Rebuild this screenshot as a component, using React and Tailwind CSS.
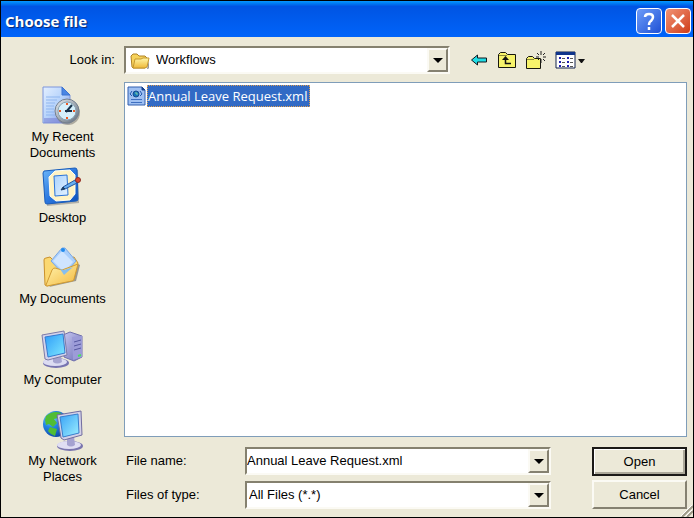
import { useState } from 'react'

function PlaceIcon({ children }) {
  return (
    <svg width="40" height="40" viewBox="1 0 40 40" className="shrink-0 overflow-visible" aria-hidden="true">
      {children}
    </svg>
  )
}

function RecentIcon() {
  return (
    <PlaceIcon>
      <defs>
        <linearGradient id="page" x1="0" y1="0" x2="1" y2="1">
          <stop offset="0" stopColor="#e3efff" />
          <stop offset="0.5" stopColor="#b5d2fb" />
          <stop offset="1" stopColor="#7f86d8" />
        </linearGradient>
        <linearGradient id="ring" x1="0" y1="0" x2="1" y2="1">
          <stop offset="0" stopColor="#e8edf2" />
          <stop offset="1" stopColor="#5f6a78" />
        </linearGradient>
      </defs>
      <path d="M1 2h19l8 8v28H1z" fill="url(#page)" stroke="#7d95dc" />
      <path d="M20 2v8h8z" fill="#4a86e4" stroke="#3d73d0" />
      <path d="M4 12h14M4 15h11M4 18h9M4 21h8M4 24h8M4 27h8M4 30h9" stroke="#8fb6ef" />
      <path d="M2 33h13l5 5H2z" fill="#7d87d6" opacity="0.6" />
      <circle cx="26" cy="28" r="12" fill="#6e6c66" opacity="0.5" />
      <circle cx="25" cy="26" r="12" fill="url(#ring)" stroke="#74808e" />
      <circle cx="25" cy="26" r="9" fill="#d6f0fb" stroke="#8aa5b5" />
      <path d="M25 18v2M25 32v2M17 26h2M31 26h2" stroke="#ed5b24" strokeWidth="2" />
      <path d="M23 26h7M24 27l6-7" stroke="#18324a" strokeWidth="2" />
    </PlaceIcon>
  )
}

function DesktopIcon() {
  return (
    <PlaceIcon>
      <defs>
        <linearGradient id="desk" x1="0" y1="0" x2="1" y2="1">
          <stop offset="0" stopColor="#6db8fa" />
          <stop offset="0.5" stopColor="#2c78df" />
          <stop offset="1" stopColor="#0c50ba" />
        </linearGradient>
        <linearGradient id="sheet" x1="0" y1="0" x2="1" y2="1">
          <stop offset="0" stopColor="#a9d2fd" />
          <stop offset="1" stopColor="#e4f2ff" />
        </linearGradient>
      </defs>
      <path d="M4 6l32-2 1 33-32 3z" fill="#777" opacity="0.5" />
      <path d="M2 5l31-3q2 0 2 2l1 29q0 2-2 2L5 38q-2 0-2-2L1 7z" fill="url(#desk)" stroke="#195dbb" />
      <path d="M13 5l15-1 5 5v19l-5 6-14 1-6-5-1-19z" fill="#fff3c4" stroke="#fffdf0" />
      <path d="M12 10l13-1 1 20-13 1z" fill="url(#sheet)" stroke="#2c75d8" />
      <path d="M21 21l12-7 2 3-12 6z" fill="#67aef0" stroke="#25559f" />
      <path d="M19 24l2-3 2 2z" fill="#173c67" stroke="#173c67" />
      <circle cx="36" cy="14" r="2.500" fill="#dd482b" stroke="#8e2d23" />
    </PlaceIcon>
  )
}

function DocumentsIcon() {
  return (
    <PlaceIcon>
      <defs>
        <linearGradient id="docFolder" x1="0" y1="0" x2="1" y2="1">
          <stop offset="0" stopColor="#fff3ae" />
          <stop offset="1" stopColor="#f3b93f" />
        </linearGradient>
      </defs>
      <path d="M7 40l27-6 4-16-4-2z" fill="#65635b" opacity="0.6" />
      <path d="M2 13q0-2 2-2l4-1 4 4 20-4 4 6-4 16-27 7-2-1z" fill="#fbd871" stroke="#ca912b" />
      <path d="M20 1h3l11 13-12 14L9 14z" fill="#a9cffc" stroke="#7aa7e4" />
      <path d="M20 4l11 11-9 10L11 14z" fill="#cfe5ff" />
      <circle cx="21" cy="3" r="2" fill="#218bed" />
      <path d="M10 23q1-2 3-2l7 2 16-6-4 15q0 2-2 2L5 39q-1 0-1-1z" fill="url(#docFolder)" stroke="#d09b34" />
      <path d="M18 22l4 1 9-3-9 8z" fill="#86beee" />
    </PlaceIcon>
  )
}

function ComputerIcon() {
  return (
    <PlaceIcon>
      <defs>
        <linearGradient id="screen" x1="0" y1="0" x2="1" y2="1">
          <stop offset="0" stopColor="#2f9df8" />
          <stop offset="1" stopColor="#7fe8ff" />
        </linearGradient>
        <linearGradient id="tower" x1="0" y1="0" x2="1" y2="1">
          <stop offset="0" stopColor="#c8c9f2" />
          <stop offset="1" stopColor="#6b6cb4" />
        </linearGradient>
      </defs>
      <path d="M21 7l7-3 12 4v21l-8 4-10-4z" fill="url(#tower)" stroke="#7070ad" />
      <path d="M30 9l10-1v21l-9 3z" fill="#9c9cd8" />
      <path d="M32 14l7-2M32 18l7-2M32 22l7-2" stroke="#5658a0" />
      <path d="M36 28l3-1" stroke="#46e25d" strokeWidth="2" />
      <ellipse cx="14" cy="35" rx="13" ry="5" fill="#7774b0" />
      <ellipse cx="13" cy="34" rx="12" ry="4" fill="#dcdcf2" />
      <path d="M11 28h8l1 6q-5 3-9 0z" fill="#a5a4d0" />
      <path d="M0 7l22-4 3 24-19 5-3-1z" fill="#d3d2ea" stroke="#7c7ba8" />
      <path d="M3 9l18-3 2 19-17 4z" fill="url(#screen)" stroke="#357acf" />
    </PlaceIcon>
  )
}

function NetworkIcon() {
  return (
    <PlaceIcon>
      <defs>
        <radialGradient id="globe" cx="0.3" cy="0.3" r="0.8">
          <stop offset="0" stopColor="#a3dbff" />
          <stop offset="0.4" stopColor="#2487e6" />
          <stop offset="1" stopColor="#0d3f9f" />
        </radialGradient>
        <linearGradient id="netScreen" x1="0" y1="0" x2="1" y2="1">
          <stop offset="0" stopColor="#39a2f6" />
          <stop offset="1" stopColor="#9df0ff" />
        </linearGradient>
      </defs>
      <circle cx="14" cy="15" r="13" fill="url(#globe)" />
      <path d="M4 7q7-6 15-3l-3 5-4 1 3 4-4 4-4-3-3 1-1-5zM8 18l7 2-2 7q-4-1-7-5z" fill="#51bd34" />
      <ellipse cx="28" cy="37" rx="13" ry="5" fill="#7a75ae" />
      <ellipse cx="27" cy="36" rx="12" ry="4" fill="#e0def3" />
      <path d="M25 27h7l1 9q-4 3-8 0z" fill="#a5a2d0" />
      <path d="M15 6l24-4 1 24-18 5-3-2z" fill="#d3d1e8" stroke="#716da0" />
      <path d="M18 8l18-3 1 19-16 4z" fill="url(#netScreen)" stroke="#397ecc" />
    </PlaceIcon>
  )
}

function FolderIcon() {
  return (
    <svg width="20" height="18" viewBox="0 0 20 18" aria-hidden="true">
      <defs>
        <linearGradient id="folder" x1="0" y1="0" x2="0" y2="1">
          <stop offset="0" stopColor="#fff6a7" />
          <stop offset="1" stopColor="#efb939" />
        </linearGradient>
      </defs>
      <path d="M4 17h13l2-9v8l-1 1z" fill="#555" opacity="0.6" />
      <path d="M2 15L1 4l2-2h4l2 2h6l2 2v8l-2 2H3z" fill="#f6d25b" stroke="#b08224" />
      <path d="M3 16l2-9h6l2-1h6l-2 9-2 1z" fill="url(#folder)" stroke="#c59830" />
    </svg>
  )
}

function XmlIcon() {
  return (
    <svg width="19" height="20" viewBox="0 0 19 20" aria-hidden="true">
      <path d="M1 1h14l3 3v15H1z" fill="#9fc0f2" stroke="#315fae" />
      <path d="M15 1v3h3z" fill="#16438d" stroke="#16438d" />
      <path d="M5 5L3 8l2 2M13 5l2 3-2 2" fill="none" stroke="#2358ab" />
      <circle cx="9" cy="8" r="3" fill="#1674b9" stroke="#174c8e" />
      <path d="M8 7h2v2" stroke="#7ed0a0" fill="none" />
      <path d="M4 13.500h11M4 16.500h11" stroke="#3f6fc0" />
    </svg>
  )
}

function BackIcon() {
  return (
    <svg width="18" height="14" viewBox="0 0 18 14" aria-hidden="true">
      <path d="M1.500 7l6-5v3h9v4h-9v3z" fill="#20dce4" stroke="#101820" />
    </svg>
  )
}

function UpIcon() {
  return (
    <svg width="20" height="18" viewBox="0 0 20 18" aria-hidden="true">
      <path d="M1.500 3.500l2-2h5l2 2h8v13h-17z" fill="#f7f36b" stroke="#17170f" />
      <path d="M2 4.500h8" stroke="#8c8938" />
      <path d="M14 12.500H8.500V8" fill="none" stroke="#111" strokeWidth="1.500" />
      <path d="M5 9h7L8.500 5z" fill="#111" />
    </svg>
  )
}

function NewFolderIcon() {
  return (
    <svg width="20" height="20" viewBox="0 0 20 20" aria-hidden="true">
      <path d="M.5 8.500l2-2h4l2 2h6v10H.5z" fill="#f7f36b" stroke="#17170f" />
      <path d="M1 9.500h7" stroke="#8c8938" />
      <path d="M15 1v4M15 9v4M10 7h3M17 7h3M11 3l2 2M17 9l2 2M19 3l-2 2M13 9l-1 1" stroke="#222" />
    </svg>
  )
}

function ViewIcon() {
  return (
    <svg width="30" height="18" viewBox="0 0 30 18" aria-hidden="true">
      <path d="M1 1h19v16H1z" fill="#fff" stroke="#12234c" />
      <path d="M1 1h19v3H1z" fill="#10358b" />
      <path d="M4 7h2M4 11h2M4 15h2M12 7h2M12 11h2M12 15h2" stroke="#2020b0" strokeWidth="2" />
      <path d="M7 7.500h3M7 11.500h3M7 15.500h3M15 7.500h3M15 11.500h3M15 15.500h3" stroke="#555" />
      <path d="M23 8h7l-3 4h-1z" fill="#111" />
    </svg>
  )
}

function Arrow() {
  return (
    <svg width="10" height="5" viewBox="0 0 10 5" aria-hidden="true">
      <path d="M0 0h10L5 5z" fill="#000" />
    </svg>
  )
}

const places = [
  { name: 'My Recent Documents', icon: RecentIcon },
  { name: 'Desktop', icon: DesktopIcon },
  { name: 'My Documents', icon: DocumentsIcon },
  { name: 'My Computer', icon: ComputerIcon },
  { name: 'My Network Places', icon: NetworkIcon },
]

const tools = [
  { name: 'Back', icon: BackIcon },
  { name: 'Up one level', icon: UpIcon },
  { name: 'Create new folder', icon: NewFolderIcon },
  { name: 'View menu', icon: ViewIcon },
]

const sunken =
  'flex h-7 items-stretch border-2 border-t-[#85816f] border-l-[#85816f] border-r-[#fbfaf4] border-b-[#fbfaf4] bg-white'
const raised =
  'border-2 border-t-[#fbfaf4] border-l-[#fbfaf4] border-r-[#858171] border-b-[#858171] bg-[#ece9d8]'

function SelectBox({ id, icon, children }) {
  return (
    <div className={`relative ${sunken}`}>
      {icon && <span className="pointer-events-none absolute top-1 left-1">{icon}</span>}
      <select
        id={id}
        className={`min-w-0 flex-1 appearance-none bg-white outline-none ${icon ? 'pl-[30px]' : 'pl-0.5'}`}
      >
        {children}
      </select>
      <span className={`pointer-events-none absolute inset-y-0 right-0 flex w-[21px] items-center justify-center ${raised}`}>
        <Arrow />
      </span>
    </div>
  )
}

export default function App() {
  const [fileName, setFileName] = useState('Annual Leave Request.xml')

  return (
    <div className="relative flex min-h-screen flex-col border border-black bg-[#ece9d8] font-['Liberation_Sans',Arial,sans-serif] text-[13px] text-black">
      <header className="flex h-9 items-center justify-between bg-linear-to-b from-[#0997ff] via-[#0054e3] via-15% to-[#0064fa] pr-0.5 pl-1">
        <h1 className="pt-1 font-['Open_Sans',sans-serif] text-[15px] font-bold text-white [text-shadow:1px_1px_1px_#0a246a]">
          Choose file
        </h1>
        <div className="flex gap-[3px] pt-1">
          <button
            aria-label="Help"
            className="flex size-[26px] items-center justify-center rounded border border-white bg-linear-to-br from-[#6f9cf8] to-[#1f4fd5]"
          >
            <svg width="14" height="18" viewBox="0 0 14 18" fill="none" stroke="#fff" strokeWidth="2.500">
              <path d="M3 5q0-3 4-3t4 3q0 2-2 4-2 1-2 4M7 15v3" />
            </svg>
          </button>
          <button
            aria-label="Close"
            className="flex size-[26px] items-center justify-center rounded border border-white bg-linear-to-br from-[#f09274] to-[#cf3a12]"
          >
            <svg width="16" height="16" viewBox="0 0 16 16" stroke="#fff" strokeWidth="2.500">
              <path d="M2 2l12 12M14 2L2 14" />
            </svg>
          </button>
        </div>
      </header>

      <div className="flex flex-1 pt-[9px]">
        <aside className="flex w-[123px] shrink-0 flex-col">
          <label htmlFor="look-in" className="h-[39px] pt-1 pr-[9px] text-right">
            Look in:
          </label>
          <nav aria-label="Places">
            {places.map(({ name, icon: Icon }) => (
              <button key={name} className="flex h-[81px] w-full flex-col items-center gap-1 px-3 leading-4">
                <Icon />
                <span>{name}</span>
              </button>
            ))}
          </nav>
        </aside>

        <main className="flex min-w-0 flex-1 flex-col pr-1.5 pb-2">
          <div className="flex items-center">
            <div className="w-[326px]">
              <SelectBox id="look-in" icon={<FolderIcon />}>
                <option>Workflows</option>
              </SelectBox>
            </div>
            <div className="ml-5 flex items-center gap-[9px]">
              {tools.map(({ name, icon: Icon }) => (
                <button key={name} aria-label={name}>
                  <Icon />
                </button>
              ))}
            </div>
          </div>

          <ul className="mt-2 min-h-40 flex-1 border border-[#7f9db9] bg-white p-0.5">
            <li>
              <button className="flex items-center gap-px">
                <XmlIcon />
                <span className="border border-dotted border-[#e0a050] bg-[#316ac5] pr-0.5 font-['Open_Sans',sans-serif] leading-5 text-white">
                  Annual Leave Request.xml
                </span>
              </button>
            </li>
          </ul>

          <form className="mt-2.5 flex items-start justify-between" onSubmit={(e) => e.preventDefault()}>
            <div className="grid grid-cols-[117px_306px] items-center gap-x-0.5 gap-y-1.5 pl-0.5">
              <label htmlFor="file-name">File name:</label>
              <div className={sunken}>
                <input
                  id="file-name"
                  value={fileName}
                  onChange={(e) => setFileName(e.target.value)}
                  className="min-w-0 flex-1 outline-none"
                />
                <button type="button" aria-label="Show file names" className={`flex w-[21px] items-center justify-center ${raised}`}>
                  <Arrow />
                </button>
              </div>
              <label htmlFor="file-type">Files of type:</label>
              <SelectBox id="file-type">
                <option>All Files (*.*)</option>
              </SelectBox>
            </div>
            <div className="flex w-[95px] flex-col gap-1">
              <button type="submit" className="h-[29px] border-2 border-[#1b1916] shadow-[inset_1px_1px_#fff,inset_-2px_-2px_#aca899]">
                Open
              </button>
              <button type="button" className={`h-[29px] ${raised}`}>
                Cancel
              </button>
            </div>
          </form>
        </main>
      </div>
      <svg width="12" height="12" viewBox="0 0 12 12" className="absolute right-0 bottom-0" aria-hidden="true">
        <path d="M1 12L12 1M6 12l6-6" stroke="#9d9987" strokeWidth="2" />
        <path d="M0 11L11 0M5 11l6-6" stroke="#fff" />
      </svg>
    </div>
  )
}
